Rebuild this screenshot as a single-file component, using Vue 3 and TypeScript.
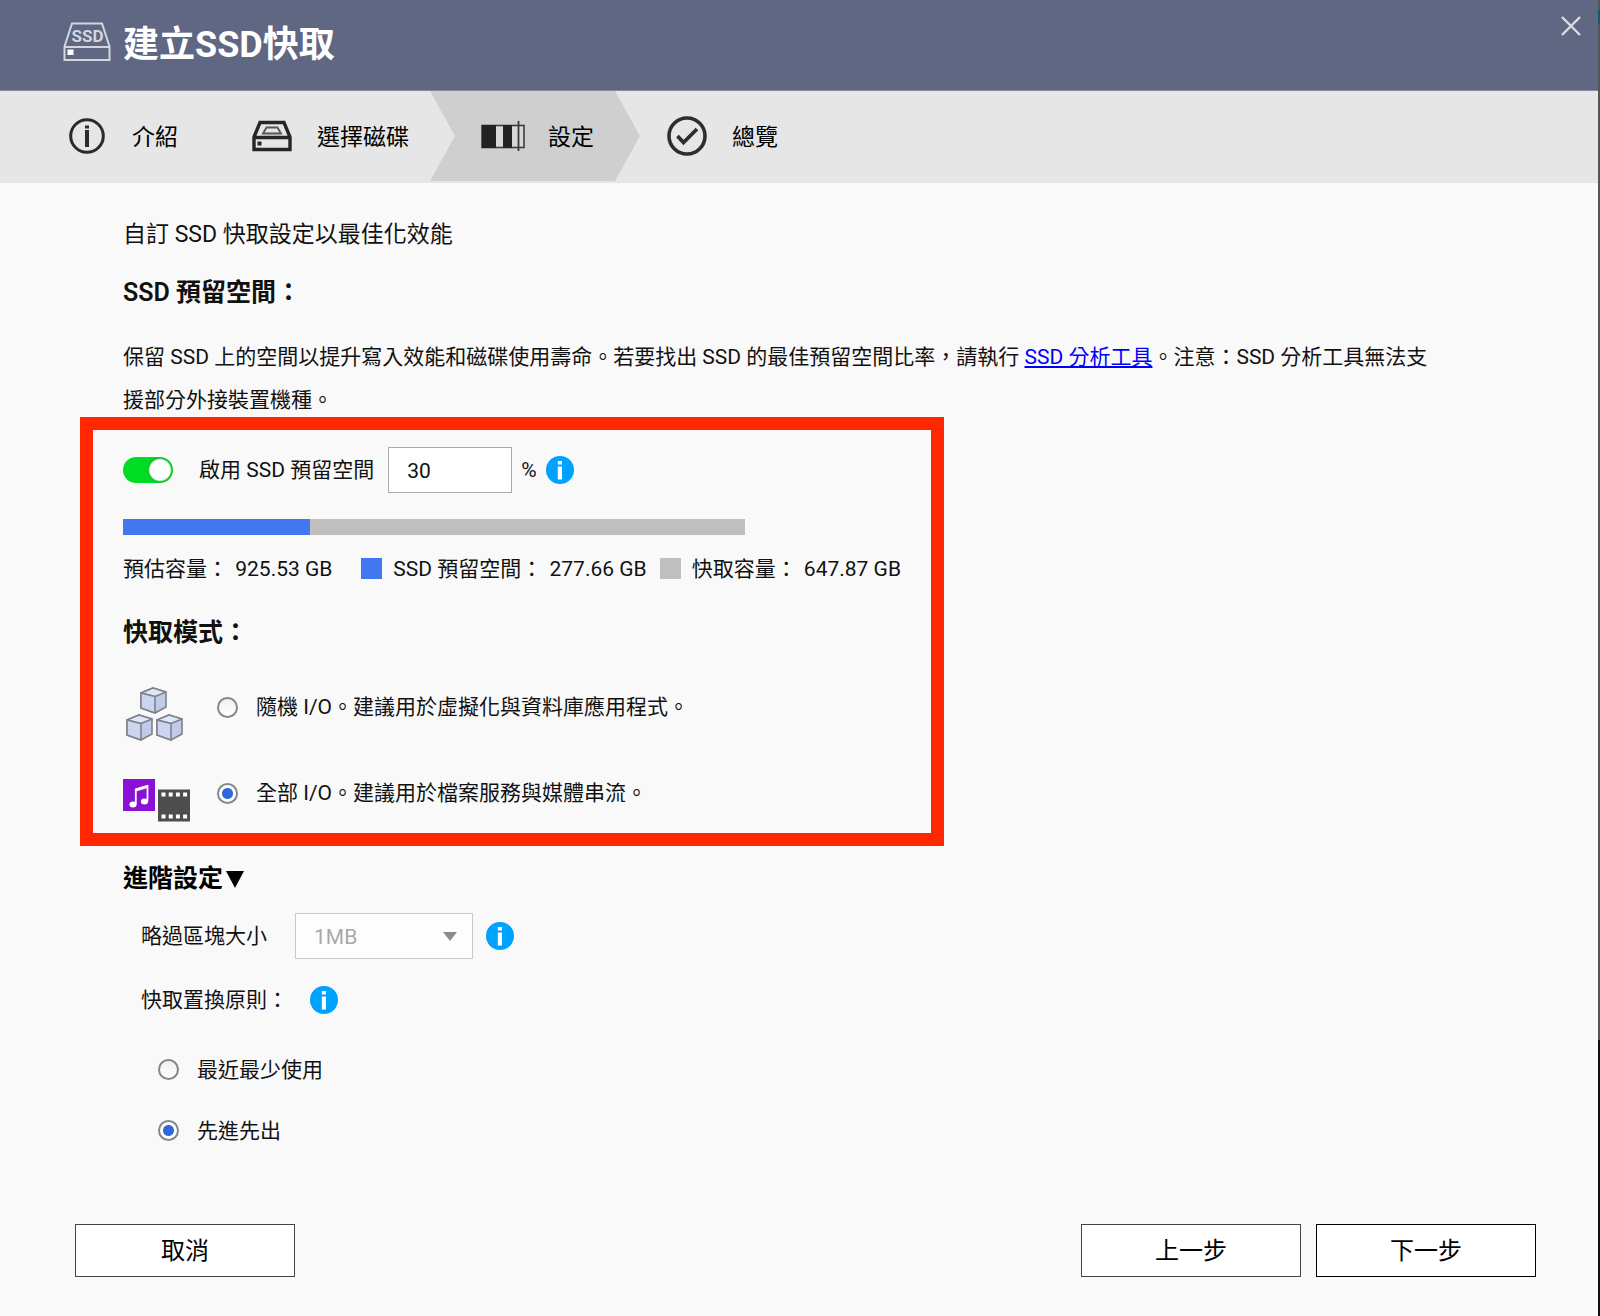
<script setup lang="ts">
import { computed, ref } from 'vue'

const enabled = ref(true)
const reserve = ref('30')
const blockSize = ref('1MB')
const cacheMode = ref('all')
const policy = ref('fifo')

const total = 925.53
const percent = computed(() => Math.min(100, Math.max(0, Number(reserve.value) || 0)))
const reserved = computed(() => (total * percent.value) / 100)
const usable = computed(() => total - reserved.value)
</script>

<template>
  <div class="wizard" lang="zh-Hant">
    <header class="titlebar">
      <svg class="ssd-logo" width="48" height="40" viewBox="0 0 48 40">
        <path d="M1.5 24.500L9 1.500H39L46.500 24.500V38H1.500Z M1.500 25H46.500" fill="none" stroke="#d3d6df" stroke-width="2" />
        <rect x="4.500" y="27.500" width="6" height="5.500" fill="#fff" />
        <text x="24.500" y="20" text-anchor="middle" font-family="Roboto, sans-serif" font-weight="700" font-size="17" fill="#d3d6df">SSD</text>
      </svg>
      <h1>建立SSD快取</h1>
      <button class="close" type="button" aria-label="關閉">
        <svg width="20" height="20" viewBox="0 0 20 20">
          <path d="M1 1L19 19M19 1L1 19" stroke="#dcdee6" stroke-width="2.400" />
        </svg>
      </button>
    </header>

    <nav class="steps">
      <div class="step first">
        <svg width="36" height="36" viewBox="0 0 36 36">
          <circle cx="18" cy="18" r="16.300" fill="none" stroke="#2b2b2b" stroke-width="3" />
          <rect x="16" y="7.500" width="4" height="3" fill="#2b2b2b" />
          <rect x="16" y="12" width="4" height="17" fill="#2b2b2b" />
        </svg>
        <span>介紹</span>
      </div>
      <div class="step disks">
        <svg width="40" height="32" viewBox="0 0 40 32">
          <path d="M2 17L8 2.500H32L38 17V29.500H2Z M2 17.500H38" fill="none" stroke="#262626" stroke-width="3.400" />
          <path d="M11 13.500L14.500 7.500H25.500L29 13.500Z" fill="none" stroke="#555" stroke-width="1.800" />
          <rect x="5.500" y="21.500" width="4" height="4" fill="#262626" />
        </svg>
        <span>選擇磁碟</span>
      </div>
      <div class="step current">
        <svg width="44" height="32" viewBox="0 0 44 32">
          <rect x="1" y="5.500" width="42" height="22" fill="#e2e2e2" fill-opacity=".5" stroke="#3c3c3c" stroke-width="1.600" />
          <rect x="1" y="5" width="14" height="23" fill="#222" />
          <rect x="22" y="5" width="9" height="23" fill="#222" />
          <path d="M37.500 1V31" stroke="#3c3c3c" stroke-width="1.800" />
        </svg>
        <span>設定</span>
      </div>
      <div class="step last">
        <svg width="40" height="40" viewBox="0 0 40 40">
          <circle cx="20" cy="20" r="18" fill="none" stroke="#2e2e2e" stroke-width="3.600" />
          <path d="M10.500 20L16.500 26.500L30 13" fill="none" stroke="#2e2e2e" stroke-width="3.800" />
        </svg>
        <span>總覽</span>
      </div>
    </nav>

    <main>
      <p class="intro">自訂 SSD 快取設定以最佳化效能</p>
      <h2>SSD 預留空間：</h2>
      <p class="note">
        保留 SSD 上的空間以提升寫入效能和磁碟使用壽命。若要找出 SSD 的最佳預留空間比率，請執行 <a href="#">SSD 分析工具</a>。注意：SSD 分析工具無法支援部分外接裝置機種。
      </p>

      <section class="marked">
        <div class="reserve-row">
          <input id="enable" v-model="enabled" class="toggle" type="checkbox" />
          <label class="enable-label" for="enable">啟用 SSD 預留空間</label>
          <input v-model="reserve" class="amount" type="text" aria-label="SSD 預留空間百分比" />
          <span class="unit">%</span>
          <svg class="info" width="28" height="28" viewBox="0 0 28 28">
            <circle cx="14" cy="14" r="14" fill="#00a2ff" />
            <path d="M11.800 5H16V8.500H11.800ZM11.800 10.500H16V23.500H11.800Z" fill="#fff" />
          </svg>
        </div>
        <div class="bar"><div class="bar-fill" :style="{ width: percent + '%' }"></div></div>
        <div class="legend">
          <span>預估容量： <span class="value">{{ total.toFixed(2) }} GB</span></span>
          <i class="swatch blue"></i>
          <span>SSD 預留空間： <span class="value">{{ reserved.toFixed(2) }} GB</span></span>
          <i class="swatch"></i>
          <span>快取容量： <span class="value">{{ usable.toFixed(2) }} GB</span></span>
        </div>
        <h2 class="mode-title">快取模式：</h2>
        <div class="mode">
          <svg class="mode-icon" width="68" height="56" viewBox="0 0 68 56">
            <defs>
              <g id="cube" stroke="#7f828a" stroke-width="1.600" stroke-linejoin="round">
                <path d="M1 6L13 1L26 5V20L15 26L1 21Z" fill="#bfcbe9" />
                <path d="M1 6L13 1L26 5L15 9.500Z" fill="#dfe7fa" />
                <path d="M1 6L15 9.500V26L1 21Z" fill="#cbd5ef" />
              </g>
            </defs>
            <use href="#cube" x="17" y="1" />
            <use href="#cube" x="3" y="28" />
            <use href="#cube" x="33" y="28" />
          </svg>
          <input id="mode-random" v-model="cacheMode" type="radio" name="mode" value="random" />
          <label for="mode-random">隨機 I/O。建議用於虛擬化與資料庫應用程式。</label>
        </div>
        <div class="mode">
          <svg class="mode-icon media" width="68" height="44" viewBox="0 0 68 44">
            <rect width="32" height="32" fill="#8a10d6" />
            <path d="M12.800 25V10.500L24.500 7V22" fill="none" stroke="#fff" stroke-width="1.800" />
            <path d="M12.800 9.500L24.500 6V9L12.800 12.500Z" fill="#fff" />
            <ellipse cx="10" cy="25.500" rx="3.600" ry="3" fill="#fff" />
            <ellipse cx="21.500" cy="22.500" rx="3.600" ry="3" fill="#fff" />
            <rect x="35" y="10.500" width="32" height="32" fill="#4d4d4d" />
            <path d="M38.500 15.500H64.500M38.500 37.500H64.500" stroke="#fff" stroke-width="4" stroke-dasharray="4 3.200" />
          </svg>
          <input id="mode-all" v-model="cacheMode" type="radio" name="mode" value="all" />
          <label for="mode-all">全部 I/O。建議用於檔案服務與媒體串流。</label>
        </div>
      </section>

      <h2 class="advanced">
        進階設定<svg width="18" height="17" viewBox="0 0 18 17"><path d="M0 0H18L9 17Z" fill="#000" /></svg>
      </h2>
      <div class="block-row">
        <label for="block">略過區塊大小</label>
        <div class="select">
          <select id="block" v-model="blockSize" disabled>
            <option>1MB</option>
          </select>
          <svg width="14" height="9" viewBox="0 0 14 9"><path d="M0 0H14L7 9Z" fill="#8c8c8c" /></svg>
        </div>
        <svg class="info" width="28" height="28" viewBox="0 0 28 28">
          <circle cx="14" cy="14" r="14" fill="#00a2ff" />
          <path d="M11.800 5H16V8.500H11.800ZM11.800 10.500H16V23.500H11.800Z" fill="#fff" />
        </svg>
      </div>
      <div class="policy-row">
        <span>快取置換原則：</span>
        <svg class="info" width="28" height="28" viewBox="0 0 28 28">
          <circle cx="14" cy="14" r="14" fill="#00a2ff" />
          <path d="M11.800 5H16V8.500H11.800ZM11.800 10.500H16V23.500H11.800Z" fill="#fff" />
        </svg>
      </div>
      <div class="policy">
        <input id="lru" v-model="policy" type="radio" name="policy" value="lru" />
        <label for="lru">最近最少使用</label>
      </div>
      <div class="policy">
        <input id="fifo" v-model="policy" type="radio" name="policy" value="fifo" />
        <label for="fifo">先進先出</label>
      </div>
    </main>

    <footer>
      <button type="button">取消</button>
      <button class="back" type="button">上一步</button>
      <button class="next" type="button">下一步</button>
    </footer>
  </div>
</template>

<style>
body {
  background: #f9f9f9;
}
</style>

<style scoped>
* {
  box-sizing: border-box;
}
.wizard {
  position: relative;
  display: flex;
  flex-direction: column;
  min-height: 100vh;
  background: #f9f9f9;
  color: #111;
  font-family: Roboto, "Noto Sans CJK TC", sans-serif;
  font-size: 21px;
  line-height: 32px;
}
.wizard::after {
  content: "";
  position: absolute;
  top: 0;
  right: 0;
  bottom: 0;
  width: 2px;
  background: linear-gradient(#555 10px, #0b5f66 10px, #0b5f66 24px, #555 24px, #555 1040px, #111 1040px);
}
h1,
h2,
p {
  margin: 0;
}
svg {
  display: block;
  flex: none;
}
.titlebar {
  display: flex;
  align-items: flex-start;
  height: 91px;
  padding: 20px 19px 0 63px;
  background: #606783;
  border-bottom: 1px solid #8a8ca3;
}
.ssd-logo {
  margin-top: 2px;
}
h1 {
  margin-left: 12px;
  color: #fff;
  font-size: 36px;
  font-weight: 700;
  line-height: 50px;
}
.close {
  margin: -4px 0 0 auto;
  padding: 0;
  border: 0;
  background: none;
}
.steps {
  display: flex;
  height: 92px;
  padding-left: 69px;
  background: #e6e6e6;
  color: #000;
  font-size: 23px;
}
.step {
  display: flex;
  align-items: center;
  gap: 25px;
  height: 90px;
}
.step span {
  padding-top: 4px;
}
.first {
  gap: 27px;
}
.disks {
  margin-left: 74px;
}
.current {
  gap: 23px;
  margin-left: 21px;
  padding: 0 46px 0 51px;
  background: #cfcfcf;
  clip-path: polygon(0 0, calc(100% - 25px) 0, 100% 50%, calc(100% - 25px) 100%, 0 100%, 25px 50%);
}
.last {
  margin-left: 27px;
}
main {
  padding: 36px 162px 0 123px;
}
.intro {
  font-size: 23px;
}
h2 {
  font-size: 25px;
  font-weight: 600;
  line-height: 36px;
}
.intro + h2 {
  margin-top: 24px;
}
.note {
  margin-top: 25px;
  line-height: 43px;
}
a {
  color: #00f;
}
.marked {
  width: 864px;
  margin: -5px 0 0 -43px;
  padding: 17px 30px 0;
  border: 13px solid #ff2600;
}
.reserve-row,
.legend,
.mode,
.block-row,
.policy-row,
.policy {
  display: flex;
  align-items: center;
}
.toggle {
  appearance: none;
  width: 50px;
  height: 26px;
  margin: 0;
  border-radius: 13px;
  background: radial-gradient(circle at 37px 13px, #fff 10px, #08b81f 12px, #00dc23 13px);
}
.enable-label {
  margin-left: 26px;
}
.amount {
  width: 124px;
  height: 46px;
  margin-left: 14px;
  padding: 2px 18px 0;
  border: 1px solid #acacac;
  background: #fff;
  color: #111;
  font: inherit;
}
.unit {
  margin-left: 9px;
}
.reserve-row .info {
  margin-left: 9px;
}
.bar {
  width: 622px;
  height: 16px;
  margin-top: 26px;
  background: #bfbfbf;
}
.bar-fill {
  height: 100%;
  background: #4178f0;
}
.legend {
  margin-top: 18px;
}
.value {
  margin-left: 2px;
}
.swatch {
  width: 21px;
  height: 21px;
  margin: 0 11px 2px 13px;
  background: #bfbfbf;
}
.swatch.blue {
  margin-left: 29px;
  background: #4178f0;
}
.mode-title {
  margin-top: 30px;
}
.mode {
  height: 80px;
}
.mode-title + .mode {
  margin-top: 16px;
}
.mode + .mode {
  margin-top: 6px;
}
.mode-icon {
  margin-top: 14px;
}
.media {
  margin-top: 16px;
}
input[type="radio"] {
  appearance: none;
  flex: none;
  width: 21px;
  height: 21px;
  margin: 0;
  border: 2px solid #868686;
  border-radius: 50%;
  background: linear-gradient(#f0f0f0, #fff);
}
input[type="radio"]:checked {
  background: radial-gradient(circle, #2f68d8 5px, #fff 6px);
}
.mode input {
  margin-left: 26px;
}
.mode label,
.policy label {
  margin-left: 18px;
}
.advanced {
  display: flex;
  align-items: center;
  gap: 3px;
  margin-top: 15px;
  color: #000;
}
.block-row {
  margin: 16px 0 0 18px;
}
.select {
  position: relative;
  width: 178px;
  margin-left: 28px;
}
select {
  appearance: none;
  display: block;
  width: 100%;
  height: 46px;
  padding: 2px 18px 0;
  border: 1px solid #c9c9c9;
  border-radius: 0;
  background: #fdfdfd;
  color: #a9a9a9;
  font: inherit;
  opacity: 1;
}
.select svg {
  position: absolute;
  top: 19px;
  right: 16px;
}
.block-row .info {
  margin-left: 13px;
}
.policy-row {
  margin: 25px 0 0 18px;
}
.policy-row .info {
  margin-left: 22px;
}
.policy {
  height: 61px;
  margin-left: 35px;
}
.policy-row + .policy {
  margin-top: 23px;
}
footer {
  display: flex;
  gap: 15px;
  margin-top: auto;
  padding: 40px 64px 39px 75px;
}
footer button {
  width: 220px;
  height: 53px;
  padding: 0;
  border: 1px solid #444;
  background: #fff;
  color: #000;
  font: inherit;
  font-size: 24px;
}
.back {
  margin-left: auto;
}
.next {
  border-color: #000;
}
</style>
